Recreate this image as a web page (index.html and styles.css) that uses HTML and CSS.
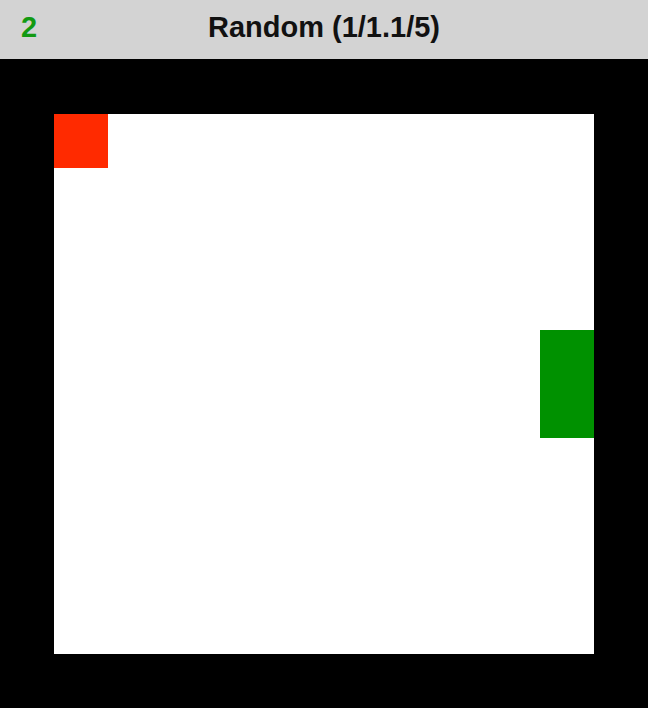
FILE: index.html
```html
<!DOCTYPE html>
<html>
<head>
<meta charset="utf-8">
<title>Random</title>
<link rel="stylesheet" href="styles.css">
</head>
<body>
<div class="header">
  <span class="score">2</span>
  <span class="title">Random (1/1.1/5)</span>
</div>
<div class="stage">
  <div class="board">
    <div class="cell red"></div>
    <div class="cell green"></div>
  </div>
</div>
</body>
</html>
```
FILE: styles.css
```css
html, body {
  margin: 0;
  padding: 0;
  background: #000;
  width: 648px;
  height: 708px;
  overflow: hidden;
}
.header {
  height: 59px;
  box-sizing: border-box;
  padding: 11px 0 0 21px;
  background: #d3d3d3;
  display: grid;
  grid-template-columns: 1fr;
  align-items: start;
  font-family: "Liberation Sans", Arial, sans-serif;
  font-weight: bold;
  font-size: 29px;
  line-height: 33px;
}
.score,
.title {
  grid-row: 1;
  grid-column: 1;
}
.score {
  justify-self: start;
  color: #129a12;
}
.title {
  justify-self: center;
  margin-left: -21px;
  color: #111;
}
.stage {
  padding: 55px 54px 0 54px;
}
.board {
  width: 540px;
  height: 540px;
  background: #fff;
  display: grid;
  grid-template-columns: repeat(10, 54px);
  grid-template-rows: repeat(10, 54px);
}
.red {
  grid-column: 1;
  grid-row: 1;
  background: #ff2a00;
}
.green {
  grid-column: 10;
  grid-row: 5 / span 2;
  background: #009100;
}
```
